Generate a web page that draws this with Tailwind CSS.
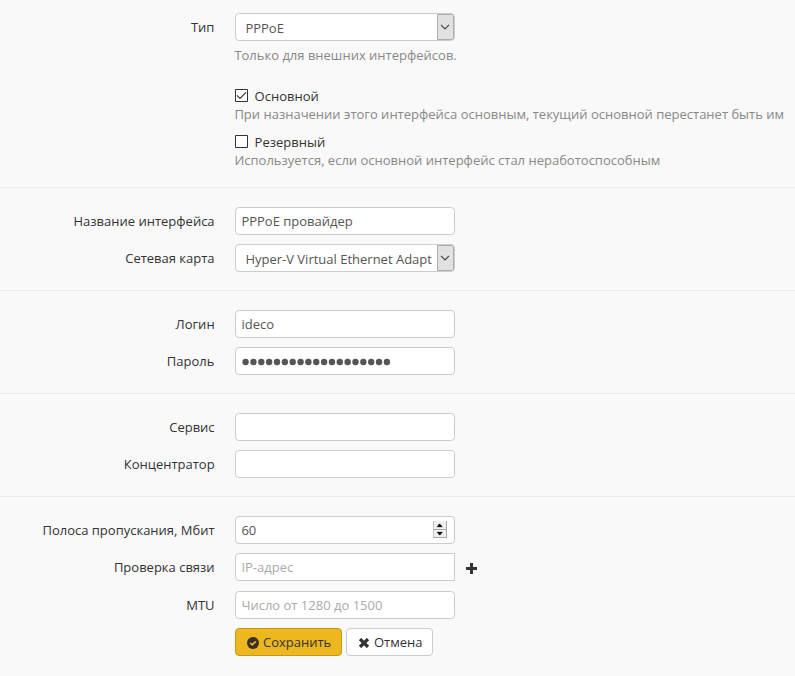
<!DOCTYPE html>
<html lang="ru">
<head>
<meta charset="utf-8">
<title>PPPoE</title>
<script src="https://cdn.jsdelivr.net/npm/@tailwindcss/browser@4"></script>
</head>
<body class="bg-[#f9f9f9] font-['Open_Sans','Noto_Sans',sans-serif] text-[13px] leading-[18px] text-[#333]">
<form class="h-[676px] w-[795px] overflow-hidden">
  <section class="h-[188px] border-b border-[#ececec] pt-[13px]">
    <div class="flex h-7 items-center gap-5">
      <label class="w-[215px] pr-[0.6px] text-right">Тип</label>
      <div class="flex h-7 w-[220px] overflow-hidden rounded-[4px] border border-[#ccc] bg-white text-[#555]">
        <span class="flex-1 overflow-hidden pt-[5px] pl-[9.4px] whitespace-nowrap">PPPoE</span>
        <span class="flex w-[17px] items-center justify-center rounded-r-[2px] border border-[#adadad] bg-[#e1e1e1] pr-px"><svg class="shrink-0" width="10" height="6" viewBox="0 0 10 6" fill="none" stroke="#444" stroke-width="1.2"><path d="M1 .8 5 4.8 9 .8"/></svg></span>
      </div>
    </div>
    <div class="pt-[5px] pl-[234.4px] whitespace-nowrap text-[#888]">
      <p>Только для внешних интерфейсов.</p>
      <div class="mt-[23px] flex h-[18px] gap-[6px] pl-[0.6px] text-[#333]">
        <svg class="mt-[2px]" width="13" height="13" viewBox="0 0 13 13" fill="white" stroke="#333"><path d="M.5 .5h12v12H.5z"/><path d="M2 6.3 5 9.3 11 3.3" fill="none" stroke-width="1.2"/></svg>
        <span class="pl-[0.6px]">Основной</span>
      </div>
      <p>При назначении этого интерфейса основным, текущий основной перестанет быть им</p>
      <div class="mt-[10px] flex h-[18px] gap-[6px] pl-[0.6px] text-[#333]">
        <svg class="mt-[2px]" width="13" height="13" viewBox="0 0 13 13" fill="white" stroke="#333"><path d="M.5 .5h12v12H.5z"/></svg>
        <span class="pl-[0.6px]">Резервный</span>
      </div>
      <p>Используется, если основной интерфейс стал неработоспособным</p>
    </div>
  </section>

  <section class="flex h-[103px] flex-col gap-[9px] border-b border-[#ececec] pt-[19px]">
    <div class="flex h-7 items-center gap-5">
      <label class="w-[215px] pr-[0.4px] text-right">Название интерфейса</label>
      <div class="h-7 w-[220px] rounded-[4px] border border-[#ccc] bg-white px-[5.4px] pt-[4px] text-[#555]">PPPoE провайдер</div>
    </div>
    <div class="flex h-7 items-center gap-5">
      <label class="w-[215px] pr-[0.4px] text-right">Сетевая карта</label>
      <div class="flex h-7 w-[220px] overflow-hidden rounded-[4px] border border-[#ccc] bg-white text-[#555]">
        <span class="flex-1 overflow-hidden pt-[5px] pl-[9.4px] whitespace-nowrap">Hyper-V Virtual Ethernet Adapt</span>
        <span class="flex w-[17px] shrink-0 items-center justify-center rounded-r-[2px] border border-[#adadad] bg-[#e1e1e1] pr-px"><svg class="shrink-0" width="10" height="6" viewBox="0 0 10 6" fill="none" stroke="#444" stroke-width="1.2"><path d="M1 .8 5 4.8 9 .8"/></svg></span>
      </div>
    </div>
  </section>

  <section class="flex h-[103px] flex-col gap-[9px] border-b border-[#ececec] pt-[19px]">
    <div class="flex h-7 items-center gap-5">
      <label class="w-[215px] pr-[0.4px] text-right">Логин</label>
      <div class="h-7 w-[220px] rounded-[4px] border border-[#ccc] bg-white px-[5.4px] pt-[4px] text-[#555]">ideco</div>
    </div>
    <div class="flex h-7 items-center gap-5">
      <label class="w-[215px] pr-[0.6px] text-right">Пароль</label>
      <div class="h-7 w-[220px] rounded-[4px] border border-[#ccc] bg-white px-[6px] pt-[10px]">
        <svg width="152" height="8" viewBox="0 0 152 8"><path d="M3.6 4H145.5" stroke="#555" stroke-width="6.4" stroke-linecap="round" stroke-dasharray="0 7.85"/></svg>
      </div>
    </div>
  </section>

  <section class="flex h-[103px] flex-col gap-[9px] border-b border-[#ececec] pt-[19px]">
    <div class="flex h-7 items-center gap-5">
      <label class="w-[215px] pr-[0.4px] text-right">Сервис</label>
      <div class="h-7 w-[220px] rounded-[4px] border border-[#ccc] bg-white"></div>
    </div>
    <div class="flex h-7 items-center gap-5">
      <label class="w-[215px] pr-[0.4px] text-right">Концентратор</label>
      <div class="h-7 w-[220px] rounded-[4px] border border-[#ccc] bg-white"></div>
    </div>
  </section>

  <section class="pt-[19px]">
    <div class="flex h-7 items-center gap-5">
      <label class="w-[215px] pr-[0.4px] text-right">Полоса пропускания, Мбит</label>
      <div class="flex h-7 w-[220px] justify-between rounded-[4px] border border-[#ccc] bg-white pr-[7px] pl-[5.4px] pt-[4px] text-[#555]">
        <span>60</span>
        <svg width="14" height="18" viewBox="0 0 14 18"><path d="M0 0h14v17H0z" fill="#efefef"/><path d="M.5 0v17" stroke="#c4c4c4"/><path d="M0 8.5h14M0 16.5h14M13.5 0v17" stroke="#aaa"/><path d="M4 6 6 3h1l2.500 3zM4 11h5.500L7.200 14h-1z" fill="#111" stroke="#111" stroke-width=".3"/></svg>
      </div>
    </div>
    <div class="mt-[9px] flex h-7 items-center">
      <label class="mr-5 w-[215px] pr-[0.4px] text-right">Проверка связи</label>
      <div class="h-7 w-[220px] rounded-l-[4px] border border-[#ccc] bg-white px-[5.4px] pt-[4px] text-[#aaa]">IP-адрес</div>
      <svg class="mt-[3px] ml-[11px]" width="11" height="11" viewBox="0 0 11 11" fill="#333"><path d="M4 0h3v4h4v3H7v4H4V7H0V4h4z"/></svg>
    </div>
    <div class="mt-[10px] flex h-7 items-center gap-5">
      <label class="w-[215px] pr-[0.4px] text-right">MTU</label>
      <div class="h-7 w-[220px] rounded-[4px] border border-[#ccc] bg-white px-[5.4px] pt-[4px] text-[#aaa]">Число от 1280 до 1500</div>
    </div>
    <div class="mt-[9px] flex gap-1 pl-[235px]">
      <button type="button" class="flex h-7 w-[107px] items-center rounded-[4px] border border-[#c4981b] bg-[#edb71f] pl-[11px] whitespace-nowrap">
        <svg class="mt-[2px] mr-[4px] shrink-0" width="12" height="12" viewBox="0 0 12 12"><circle cx="6" cy="6" r="6" fill="#3a2f25"/><path d="M3.2 5.8 5.3 7.9 8.9 4.3" fill="none" stroke="#edb71f" stroke-width="1.7"/></svg>
        <span>Сохранить</span>
      </button>
      <button type="button" class="flex h-7 w-[87px] items-center rounded-[4px] border border-[#ccc] bg-white pl-[11px] whitespace-nowrap">
        <svg class="mt-[2px] mr-[4px] shrink-0" width="12" height="10" viewBox="0 0 12 10" fill="none" stroke="#333" stroke-width="3.2"><path d="M2 1 10 9M10 1 2 9"/></svg>
        <span>Отмена</span>
      </button>
    </div>
  </section>
</form>
</body>
</html>
